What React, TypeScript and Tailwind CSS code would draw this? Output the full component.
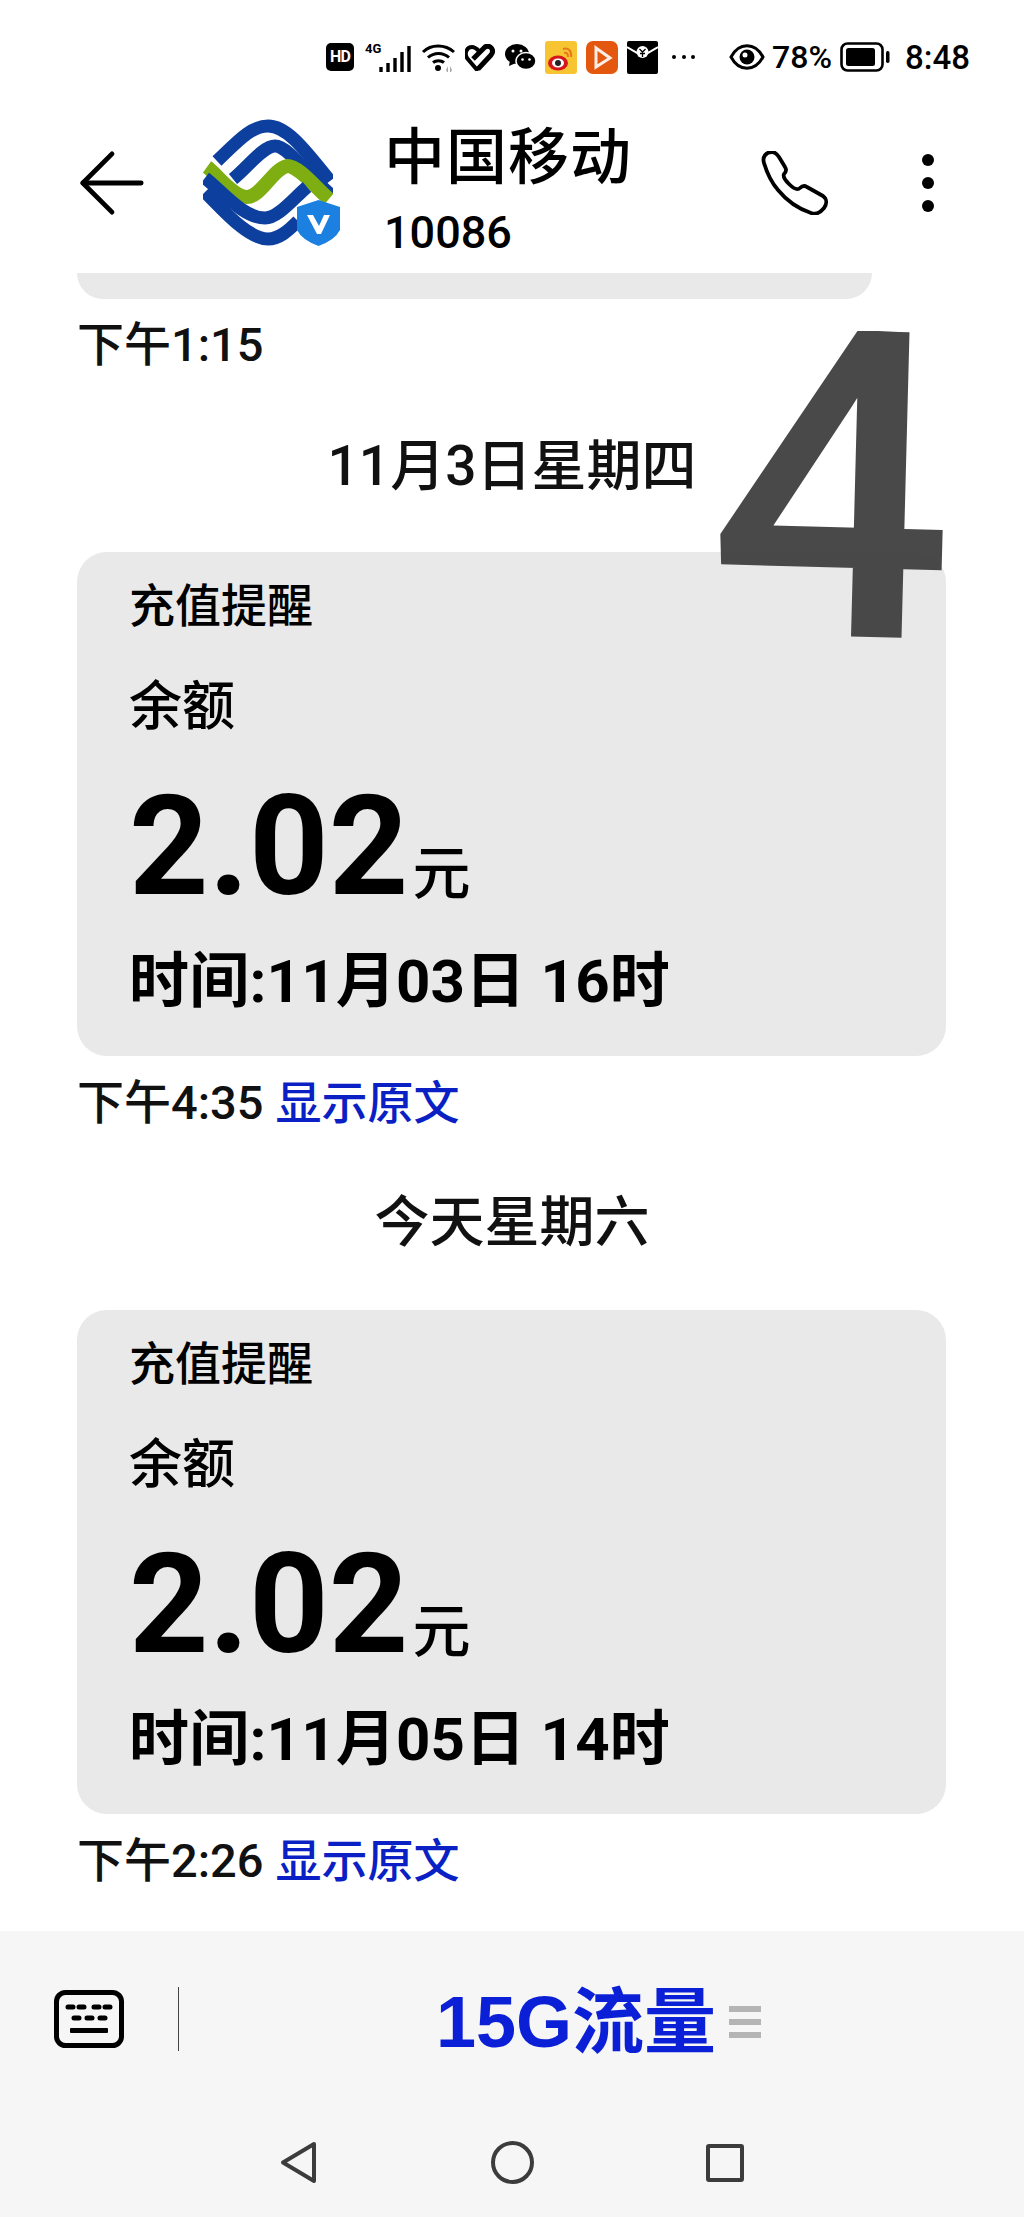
import { ArrowLeft } from "lucide-react";

const FONT = "font-['Roboto','Noto_Sans_CJK_SC',sans-serif]";

function StatusIcons() {
  return (
    <div className="flex h-[88px] items-center pt-[26px] pl-[326px] text-black">
      {/* HD badge */}
      <div className="flex h-[28px] w-[28px] items-center justify-center rounded-[5px] bg-black text-[16px] font-bold tracking-tighter text-white">HD</div>
      {/* signal */}
      <div className="relative ml-[11px] h-[30px] w-[47px]">
        <span className="absolute left-0 top-0 text-[13px] leading-[13px] font-bold">4G</span>
        <svg viewBox="0 0 47 30" className="h-[30px] w-[47px]">
          <path d="M16 30v-5M23 30v-9M30 30v-14M37 30v-20M44 30v-26" stroke="#000" strokeWidth="3.4" />
        </svg>
      </div>
      {/* wifi */}
      <svg viewBox="0 0 35 30" className="ml-[9px] h-[30px] w-[35px]">
        <path d="M2 10C10 2 24 2 33 10M7 15.5C13 10 22 10 28 15.5M12 20.5C15 18 20 18 23 20.5" fill="none" stroke="#000" strokeWidth="3" />
        <circle cx="17" cy="26" r="3" />
        <path d="M25 28l2-4v8zM29 24l2 4-2 4z" fill="#aaa" />
      </svg>
      {/* heart stripes */}
      <svg viewBox="0 0 30 27" className="ml-[9px] h-[27px] w-[30px]">
        <path d="M13 27L2 14C-1 9 2 3 7 3C10 3 12 5 14 7" fill="none" stroke="#000" strokeWidth="4" />
        <path d="M13 25L26 11C30 6 25 0 20 3L8 15" fill="none" stroke="#000" strokeWidth="5" />
      </svg>
      {/* wechat */}
      <svg viewBox="0 0 31 26" className="ml-[10px] h-[26px] w-[31px]">
        <ellipse cx="12" cy="10" rx="12" ry="10" />
        <path d="M5 16l-1 6 7-3z" />
        <ellipse cx="21" cy="17" rx="10" ry="8.5" fill="#000" stroke="#fff" strokeWidth="1.5" />
        <circle cx="8" cy="7" r="1.5" fill="#fff" />
        <circle cx="16" cy="7" r="1.5" fill="#fff" />
        <circle cx="17.5" cy="15.5" r="1.3" fill="#fff" />
        <circle cx="24.5" cy="15.5" r="1.3" fill="#fff" />
      </svg>
      {/* weibo */}
      <svg viewBox="0 0 32 33" className="ml-[9px] h-[33px] w-[32px]">
        <rect width="32" height="33" rx="3" fill="#f7c531" />
        <ellipse cx="13" cy="22" rx="10" ry="7.5" fill="#d5171c" />
        <ellipse cx="13" cy="22" rx="6" ry="4.5" fill="#fff" />
        <circle cx="13" cy="22" r="3" fill="#222" />
        <path d="M18 8c5-2 9 2 8 8M19 12c3-1 4 1 4 4" fill="none" stroke="#e8791a" strokeWidth="2" />
      </svg>
      {/* video app */}
      <svg viewBox="0 0 32 33" className="ml-[9px] h-[33px] w-[32px]">
        <rect width="32" height="33" rx="7" fill="#e4570f" />
        <path d="M10 7l14 10-14 9z" fill="none" stroke="#fff" strokeWidth="3" opacity="0.9" />
      </svg>
      {/* red packet */}
      <svg viewBox="0 0 31 33" className="ml-[9px] h-[33px] w-[31px]">
        <rect width="31" height="33" rx="2" />
        <path d="M0 6l15.5 9L31 6" fill="none" stroke="#fff" strokeWidth="2" />
        <circle cx="15.5" cy="11" r="6" fill="#fff" />
        <path d="M12.5 8l3 3 3-3M15.5 11v5M13 12.5h5" fill="none" stroke="#000" strokeWidth="1.3" />
      </svg>
      <div className="ml-[14px] flex w-[23px] justify-between">
        <span className="h-[4px] w-[4px] rounded-full bg-black" />
        <span className="h-[4px] w-[4px] rounded-full bg-black" />
        <span className="h-[4px] w-[4px] rounded-full bg-black" />
      </div>
      {/* eye */}
      <svg viewBox="0 0 36 28" className="ml-[34px] h-[28px] w-[36px]">
        <path d="M2 14C10 -1 26 -1 34 14C26 29 10 29 2 14Z" fill="none" stroke="#000" strokeWidth="3" />
        <circle cx="18" cy="14" r="7.5" />
        <circle cx="16" cy="12" r="2.5" fill="#fff" />
      </svg>
      <span className="ml-[7px] w-[61px] text-[32px] leading-none font-medium whitespace-nowrap">78%</span>
      {/* battery */}
      <svg viewBox="0 0 50 30" className="ml-[7px] h-[30px] w-[50px]">
        <rect x="1.5" y="1.5" width="41" height="27" rx="6" fill="none" stroke="#000" strokeWidth="2.6" />
        <rect x="6" y="6" width="29" height="18" rx="2.5" />
        <rect x="46" y="9" width="3.5" height="12" rx="1.7" />
      </svg>
      <span className="ml-[15px] text-[33px] leading-none font-medium">8:48</span>
    </div>
  );
}

function Logo() {
  return (
    <div className="relative h-[130px] w-[137px] shrink-0">
      <svg viewBox="0 0 130 130" className="h-[130px] w-[130px]">
        <g fill="none">
          <path d="M14 42C35 22 48 7 65 7C82 7 97 24 127 62" stroke="#0d3f9e" strokeWidth="13" />
          <path d="M30 60C45 48 60 27 72 27C85 27 105 56 128 76" stroke="#0d3f9e" strokeWidth="13" />
          <path d="M4 48C15 56 30 78 44 78C58 78 70 50 84 47C96 47 112 68 126 80" stroke="#7fae13" strokeWidth="14" />
          <path d="M2 59C20 73 40 99 62 99C75 99 90 80 104 68" stroke="#0d3f9e" strokeWidth="13" />
          <path d="M2 73C20 91 45 120 65 120C76 120 85 112 95 102" stroke="#0d3f9e" strokeWidth="13" />
        </g>
      </svg>
      <svg viewBox="0 0 43 46" className="absolute bottom-[3px] right-0 h-[46px] w-[43px]">
        <path d="M21.5 0L43 7V30Q38 40 21.5 46Q5 40 0 30V7Z" fill="#1b80e0" />
        <path d="M10 15L20 34H24L33 15H27L22 26L16 15Z" fill="#fff" />
      </svg>
    </div>
  );
}

function Header() {
  return (
    <div className="flex h-[185px] items-start pl-[62px] text-black">
      <ArrowLeft className="mt-[45px] h-[100px] w-[100px] shrink-0" strokeWidth={1.15} />
      <div className="ml-[41px] mt-[31px]">
        <Logo />
      </div>
      <div className="ml-[44px] mt-[30px] w-[248px]">
        <div className="text-[61px] leading-[80px] font-medium tracking-[1px] whitespace-nowrap">中国移动</div>
        <div className="mt-[10px] text-[45px] leading-[50px] font-medium">10086</div>
      </div>
      {/* handset */}
      <svg viewBox="0 0 68 64" className="ml-[129px] mt-[63px] h-[64px] w-[68px] shrink-0" fill="none" stroke="#000" strokeWidth="3.8" strokeLinejoin="round">
        <path d="M3 12C1 6 5 1 11 1C14 1 16 3 18 6L24 16C26 19 25 21 23 23C22 25 24 29 28 33C33 38 37 39 39 37C41 35 43 34 46 36L62 45C66 48 66 53 63 57C59 62 55 64 50 62C38 58 26 50 17 39C10 31 6 22 3 12Z" />
      </svg>
      <div className="ml-[93px] mt-[66px] flex flex-col gap-[11px]">
        <span className="h-[12px] w-[12px] rounded-full bg-black" />
        <span className="h-[12px] w-[12px] rounded-full bg-black" />
        <span className="h-[12px] w-[12px] rounded-full bg-black" />
      </div>
    </div>
  );
}

function BalanceCard({ date }: { date: string }) {
  return (
    <div className="h-[504px] w-[869px] rounded-[30px] bg-[#e9e9e9] pl-[52px] text-black">
      <div className="pt-[26px] text-[46px] leading-[56px] font-medium">充值提醒</div>
      <div className="mt-[45px] text-[53px] leading-[56px] font-medium">余额</div>
      <div className="mt-[34px] flex items-baseline">
        <span className="text-[139px] leading-[156px] font-bold">2.02</span>
        <span className="ml-[4px] text-[58px] leading-none font-medium">元</span>
      </div>
      <div className="mt-[25px] text-[60px] leading-[64px] font-bold tracking-[0.2px]">{date}</div>
    </div>
  );
}

function Timestamp({ time, original }: { time: string; original?: boolean }) {
  return (
    <div className="text-[47px] leading-[50px] font-medium text-[#111]">
      {time}
      <span className="ml-[12px] text-[46px] text-[#0a1fc4]">{original && "显示原文"}</span>
    </div>
  );
}

function DayLabel({ children }: { children: string }) {
  return <div className="text-center text-[55px] leading-[60px] font-medium text-[#111]">{children}</div>;
}

function Messages() {
  return (
    <div className="relative flex-1 pl-[77px]">
      {/* tail of the previous card */}
      <div className="h-[26px] w-[795px] rounded-b-[30px] bg-[#e9e9e9]" />
      <div className="mt-[21px]">
        <Timestamp time="下午1:15" />
      </div>
      <div className="-ml-[77px] mt-[66px]">
        <DayLabel>11月3日星期四</DayLabel>
      </div>
      <div className="mt-[56px]">
        <BalanceCard date="时间:11月03日 16时" />
      </div>
      <div className="mt-[22px]">
        <Timestamp time="下午4:35" original />
      </div>
      <div className="-ml-[77px] mt-[64px]">
        <DayLabel>今天星期六</DayLabel>
      </div>
      <div className="mt-[58px]">
        <BalanceCard date="时间:11月05日 14时" />
      </div>
      <div className="mt-[22px]">
        <Timestamp time="下午2:26" original />
      </div>
      {/* big watermark digit */}
      <div className="absolute left-[710px] top-[16px] rotate-[1.5deg] text-[430px] leading-[400px] font-medium text-[#3f3f3f]/95">
        4
      </div>
    </div>
  );
}

function BottomBar() {
  return (
    <div className="h-[286px] bg-[#f6f6f6]">
      <div className="flex h-[210px] items-start pl-[54px]">
        <svg viewBox="0 0 70 58" className="mt-[59px] h-[58px] w-[70px]">
          <rect x="2.5" y="2.5" width="65" height="53" rx="9" fill="none" stroke="#000" strokeWidth="5" />
          <path d="M14 17h5M25 17h5M40 17h5M51 17h5M20 28h5M33 28h5M46 28h5" stroke="#000" strokeWidth="5" strokeLinecap="round" />
          <rect x="16" y="38" width="38" height="5" rx="1" />
        </svg>
        <div className="ml-[54px] mt-[56px] h-[64px] w-px bg-[#444]" />
        <div className="ml-[257px] mt-[51px] flex items-center">
          <span className="font-['Liberation_Sans','Noto_Sans_CJK_SC',sans-serif] text-[72px] leading-[80px] font-bold text-[#0a1fd6]">15G流量</span>
          <div className="ml-[13px] flex w-[32px] flex-col gap-[7px]">
            <span className="h-[6px] bg-[#b4b4b4]" />
            <span className="h-[6px] bg-[#b4b4b4]" />
            <span className="h-[6px] bg-[#b4b4b4]" />
          </div>
        </div>
      </div>
      <div className="flex items-center pl-[280px]">
        <svg viewBox="0 0 37 43" className="h-[43px] w-[37px]">
          <path d="M34 3L3 21.5L34 40Z" fill="none" stroke="#3c3c3c" strokeWidth="4" strokeLinejoin="round" />
        </svg>
        <div className="ml-[174px] h-[43px] w-[43px] rounded-full border-[4px] border-[#3c3c3c]" />
        <div className="ml-[172px] h-[38px] w-[38px] rounded-[3px] border-[4px] border-[#3c3c3c]" />
      </div>
    </div>
  );
}

export default function App() {
  return (
    <div className={`${FONT} flex h-[2217px] w-[1024px] flex-col overflow-hidden bg-white`}>
      <StatusIcons />
      <Header />
      <Messages />
      <BottomBar />
    </div>
  );
}
